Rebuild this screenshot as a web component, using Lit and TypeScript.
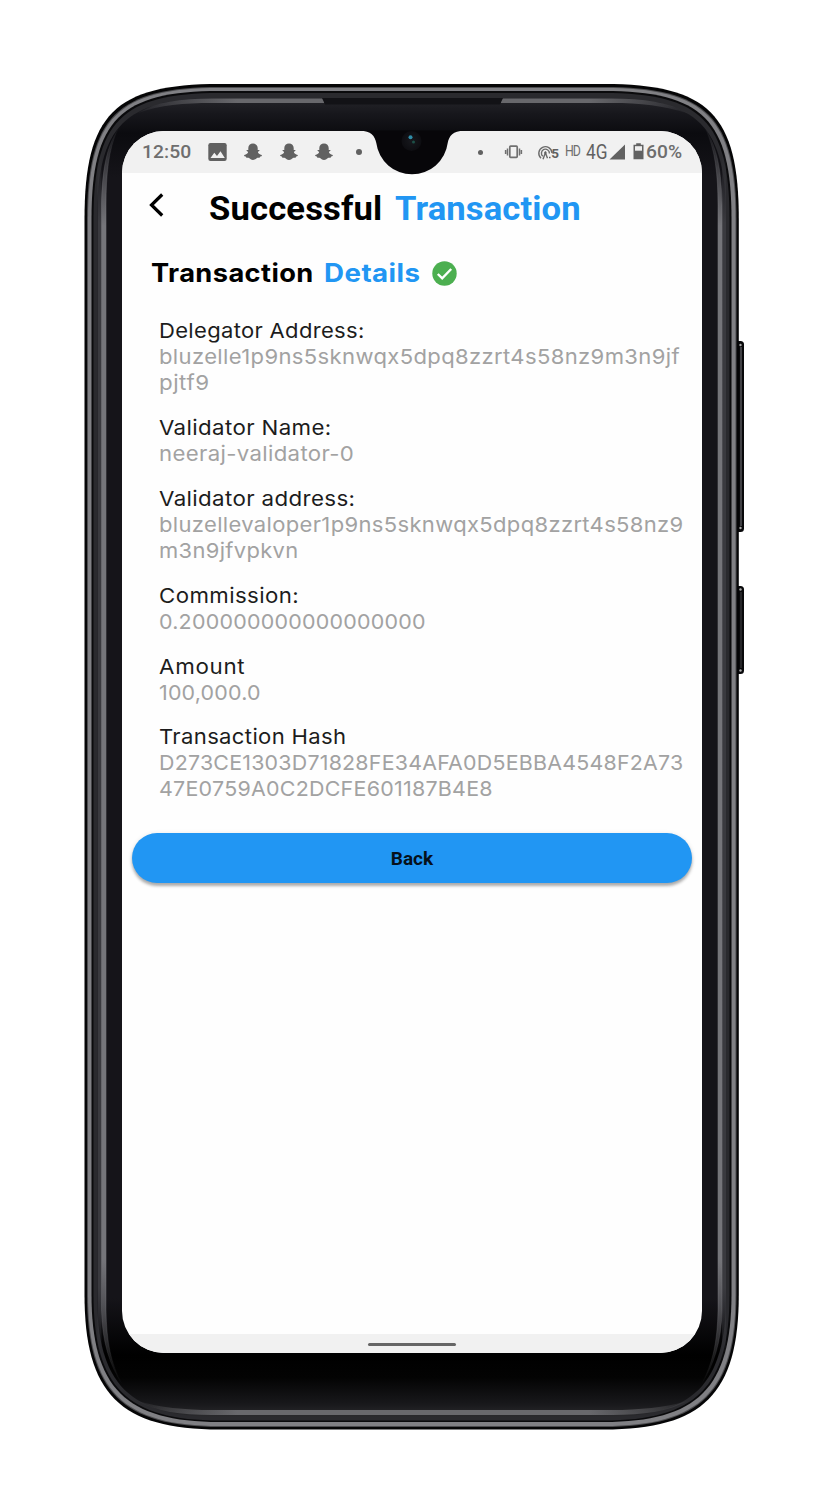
import { LitElement, html, svg, css } from "lit";
import { customElement, property } from "lit/decorators.js";

/** A single line of text fitted to a given width: glyphs widen a little, tracking takes the rest. */
@customElement("fit-line")
class FitLine extends LitElement {
  @property() text = "";
  @property({ type: Number }) w = 100;

  static styles = css`
    :host { display: block; white-space: nowrap; flex: none; }
    .line { display: inline-block; transform-origin: 0 50%; }
  `;

  render() {
    return html`<span class="line">${this.text}</span>`;
  }

  updated() {
    const el = this.renderRoot.querySelector(".line") as HTMLElement;
    const natural = el.offsetWidth;
    const gaps = Math.max(1, this.text.length);
    const scale = Math.min(1.09, Math.max(0.85, 1 + (this.w / natural - 1) * 0.7));
    el.style.letterSpacing = `${(this.w / scale - natural) / gaps}px`;
    el.style.transform = `scaleX(${scale})`;
    this.style.width = `${this.w}px`;
  }
}

type Line = [string, number];
const fields: { label: Line; lines: Line[] }[] = [
  { label: ["Delegator Address:", 205.5], lines: [["bluzelle1p9ns5sknwqx5dpq8zzrt4s58nz9m3n9jf", 520.5], ["pjtf9", 50.5]] },
  { label: ["Validator Name:", 173], lines: [["neeraj-validator-0", 195.5]] },
  { label: ["Validator address:", 196], lines: [["bluzellevaloper1p9ns5sknwqx5dpq8zzrt4s58nz9", 524.5], ["m3n9jfvpkvn", 139.5]] },
  { label: ["Commission:", 140], lines: [["0.200000000000000000", 267]] },
  { label: ["Amount", 86], lines: [["100,000.0", 102]] },
  { label: ["Transaction Hash", 187.5], lines: [["D273CE1303D71828FE34AFA0D5EBBA4548F2A73", 524], ["47E0759A0C2DCFE601187B4E8", 333.5]] },
];

const ghost = html`<svg class="ghost" width="18" height="18" viewBox="0 0 18 18">
  <path fill="#616161" d="M9 .6C6.200.6 4.300 2.600 4.300 5v1.900c-.5.1-1.800-.2-1.800.5 0 .6 1.600.9 1.600 1.600 0 1.200-1.800 2.600-3.800 3.100-.7.300.200 1.300 1.500 1.500.4.100.200 1.100.700 1.200.6.100 1.700-.2 2.500.2.900.5 2.200 1.900 4 1.900s3.100-1.400 4-1.900c.8-.4 1.900-.1 2.500-.2.5-.1.3-1.100.7-1.200 1.300-.2 2.200-1.200 1.500-1.500-2-.5-3.800-1.900-3.800-3.100 0-.7 1.600-1 1.600-1.600 0-.7-1.300-.4-1.800-.5V5C13.700 2.600 11.800.6 9 .6z"/>
</svg>`;

/** Outline of a shell layer with soft, extended corners. */
function shell(x: number, y: number, x2: number, y2: number, inset: number): string {
  const r = 135 - inset;
  const t = r * 0.225;
  const b = r * 0.265;
  return `M${x} ${y + r}C${x} ${y + t} ${x + t} ${y} ${x + r} ${y}H${x2 - r}C${x2 - t} ${y} ${x2} ${y + t} ${x2} ${y + r}` +
    `V${y2 - r}C${x2} ${y2 - b} ${x2 - b} ${y2} ${x2 - r} ${y2}H${x + r}C${x + b} ${y2} ${x} ${y2 - b} ${x} ${y2 - r}Z`;
}

@customElement("app-root")
class AppRoot extends LitElement {
  static styles = css`
    :host { display: block; width: 828px; height: 1512px; background: #fff; overflow: hidden; }
    svg { overflow: visible; flex: none; }
    .phone { position: relative; box-sizing: border-box; width: 828px; height: 1512px; padding: 131px 126px 159px 122px; }
    .frame, .notch { position: absolute; left: 0; top: 0; }
    .screen { position: relative; display: flex; flex-direction: column; width: 580px; height: 1222px; border-radius: 42px; background: #fefefe; overflow: hidden; font-family: Inter, "Noto Sans", sans-serif; }
    .status { display: flex; flex: none; align-items: center; justify-content: space-between; height: 42px; box-sizing: border-box; padding: 0 20px; background: #f1f1f1; color: #6e6e6e; font-family: Roboto, sans-serif; font-size: 19px; line-height: 44px; }
    .side { display: flex; align-items: center; height: 42px; }
    .clock { margin-right: 17px; font-weight: 500; }
    .pic { margin-right: 17px; }
    .ghost { margin-right: 17.5px; }
    .dot { width: 6px; height: 6px; margin-left: 5px; border-radius: 50%; background: #616161; }
    .dot.small { width: 5px; height: 5px; margin: 0 22px 0 0; }
    .vibrate { margin-right: 16px; }
    .hd { margin: 0 6px 0 5px; font-size: 14.5px; line-height: 42px; }
    .net { margin-right: 1px; }
    .signal { margin-right: 8px; }
    .battery { margin: 0 2px 1px 0; }
    .pct { font-weight: 500; }
    .header { display: flex; flex: none; align-items: center; height: 70px; padding: 0 0 1px 27px; box-sizing: border-box; font: 700 34px/70px Roboto, sans-serif; color: #000; }
    .back-arrow { margin: -5px 45px 0 0; }
    .gap12 { margin-left: 12px; }
    .blue { color: #2196f3; }
    .sub { display: flex; flex: none; align-items: center; height: 60px; padding-left: 29px; font-weight: 700; font-size: 25.5px; line-height: 60px; color: #000; }
    .gap11 { margin-left: 10px; }
    .check { margin-left: 12px; }
    .fields { display: flex; flex: none; flex-direction: column; gap: 18.5px; height: 485px; box-sizing: border-box; padding: 15px 0 0 36.5px; font-size: 20.5px; line-height: 26px; color: #1c1c1c; }
    .value { color: #a2a2a2; }
    .value + .value { margin-bottom: .8px; }
    .button { display: flex; flex: none; align-items: center; justify-content: center; width: 560px; height: 50px; margin: 45px 10px 0; padding: 2px 0 0; box-sizing: border-box; border: 0; border-radius: 25px; background: #2196f3; box-shadow: 0 3px 3px rgba(0,0,0,.28), 0 1px 5px rgba(0,0,0,.12); color: #06111b; font: 700 19px/48px Roboto, sans-serif; }
    .spacer { flex: 1; }
    .nav { display: flex; flex: none; align-items: center; justify-content: center; height: 19px; padding-top: 1px; box-sizing: border-box; background: #f1f1f1; }
    .pill { width: 88px; height: 3px; border-radius: 2px; background: #666; }
  `;

  private frame() {
    const layer = (x: number, y: number, x2: number, y2: number, inset: number, fill: string) =>
      svg`<path d=${shell(x, y, x2, y2, inset)} fill=${fill}/>`;
    return html`<svg class="frame" width="828" height="1512" viewBox="0 0 828 1512">
      <defs>
        <linearGradient id="body" x1="0" x2="0" y1="98" y2="1417" gradientUnits="userSpaceOnUse">
          <stop offset="0" stop-color="#25252a"/><stop offset=".012" stop-color="#17171c"/><stop offset=".027" stop-color="#0b0b0f"/>
          <stop offset=".06" stop-color="#151419"/><stop offset=".91" stop-color="#151419"/><stop offset=".953" stop-color="#000"/>
          <stop offset=".97" stop-color="#030303"/><stop offset=".99" stop-color="#18181b"/><stop offset="1" stop-color="#2a2a2d"/>
        </linearGradient>
        <linearGradient id="v" x1="0" x2="0" y1="125" y2="1385" gradientUnits="userSpaceOnUse">
          <stop offset="0" stop-color="#75757a" stop-opacity="0"/><stop offset=".08" stop-color="#75757a"/>
          <stop offset=".9" stop-color="#75757a"/><stop offset="1" stop-color="#75757a" stop-opacity="0"/>
        </linearGradient>
        <linearGradient id="edge" x1="0" x2="0" y1="150" y2="1360" gradientUnits="userSpaceOnUse">
          <stop offset="0" stop-color="#3a3a3f" stop-opacity="0"/><stop offset=".06" stop-color="#3a3a3f"/>
          <stop offset=".94" stop-color="#3a3a3f"/><stop offset="1" stop-color="#3a3a3f" stop-opacity="0"/>
        </linearGradient>
        <linearGradient id="h" x1="138" x2="688" y1="0" y2="0" gradientUnits="userSpaceOnUse">
          <stop offset="0" stop-color="#68686c" stop-opacity=".1"/><stop offset=".18" stop-color="#68686c"/>
          <stop offset=".82" stop-color="#68686c"/><stop offset="1" stop-color="#68686c" stop-opacity=".1"/>
        </linearGradient>
      </defs>
      <rect x="735" y="341" width="9" height="191" rx="3.5" fill="#09090b"/>
      <path d="M741 347V526" stroke="#55555a" stroke-width="1.5"/>
      <circle cx="740.5" cy="345" r="1.2" fill="#aaa"/><circle cx="740.5" cy="528" r="1.2" fill="#aaa"/>
      <rect x="735" y="586" width="9" height="88" rx="3.5" fill="#09090b"/>
      <path d="M741 592V668" stroke="#303034" stroke-width="1.5"/>
      <circle cx="740.5" cy="589.5" r="1.2" fill="#aaa"/><circle cx="740.5" cy="670.5" r="1.2" fill="#aaa"/>
      ${layer(84.5, 84, 738.8, 1429.5, 0, "#050506")}
      ${layer(87, 87, 736.5, 1427, 2, "#4b4b4e")}
      ${layer(88, 88, 735.5, 1426, 3, "#808084")}
      ${layer(91.5, 91, 731.5, 1422, 7, "#0a0a0c")}
      ${layer(93.5, 93, 729.5, 1420.5, 9, "#2a2a2e")}
      ${layer(97, 98, 726, 1417, 13, "url(#body)")}
      <path d="M99.5 1360V150M724 150V1360" stroke="url(#edge)" stroke-width="4" fill="none"/>
      <path d="M117.500 130C106 148 102 172 101.500 205V1310C102 1342 110 1366 122 1384C111 1364 106.500 1342 106 1310V205C106 174 108.500 150 117.500 130ZM706 130C717.500 148 721.500 172 722 205V1310C721.500 1342 713.500 1366 701.500 1384C712.500 1364 717.500 1342 718 1310V205C718 174 715 150 706 130Z" fill="url(#v)" stroke="url(#v)" stroke-width=".6"/>
      <path d="M138 113C156 102 180 98.500 212 98.500H324V103H212C184 103 160 105 138 113ZM501 98.500H612C644 98.500 668 102 688 113.500C664 105.500 640 103 612 103H501Z" fill="url(#h)"/>
      <path d="M138 1401C160 1407.500 184 1410 212 1410H612C640 1410 664 1407.500 688 1401C668 1411.500 644 1415 612 1415H212C180 1415 156 1411.500 138 1401Z" fill="url(#h)"/>
      <path d="M322 98H503L500 104.5H325Z" fill="#121216"/>
    </svg>`;
  }

  render() {
    return html`<div class="phone">
      ${this.frame()}
      <div class="screen">
        <div class="status">
          <div class="side">
            <fit-line class="clock" text="12:50" w="49"></fit-line>
            <svg class="pic" width="19" height="18" viewBox="0 0 19 18"><rect x=".3" width="18.4" height="18" rx="2.2" fill="#616161"/><path d="M2.500 15l3.800-5.200 2.700 3.100 3.500-4.600 4.300 6.700z" fill="#f1f1f1"/></svg>
            ${ghost}${ghost}${ghost}
            <span class="dot"></span>
          </div>
          <div class="side">
            <span class="dot small"></span>
            <svg class="vibrate" width="17" height="14" viewBox="0 0 17 14"><g fill="none" stroke="#707070"><rect x="4.800" y="1.200" width="7.400" height="11.200" rx=".8" stroke-width="1.7"/><path d="M2.500 3.500v7M14.500 3.500v7M.6 5v4M16.400 5v4" stroke-width="1.500"/></g></svg>
            <svg width="22" height="15" viewBox="0 0 22 15"><g fill="none" stroke="#6b6b6b" stroke-width="1.400"><path d="M3 13.200A6.600 6.600 0 1 1 14 8"/><path d="M4.800 11.200A4 4 0 1 1 11.400 8.500"/><path d="M5 14.200l2.400-6.500 2.100 5.500"/></g><circle cx="7.400" cy="7.800" r="1.200" fill="#616161"/><path d="M11 12.500h1.500" stroke="#616161" stroke-width="1.600"/><text x="13.300" y="13.200" font-family="Roboto" font-weight="700" font-size="13.500" fill="#616161">5</text></svg>
            <fit-line class="hd" text="HD" w="15"></fit-line>
            <svg class="net" width="22" height="18" viewBox="0 0 22 18"><text x="0" y="16" font-family="Roboto" font-size="20.500" textLength="21.500" lengthAdjust="spacingAndGlyphs" fill="#616161">4G</text></svg>
            <svg class="signal" width="16" height="16" viewBox="0 0 16 16"><path d="M16 .5V15.500H.5z" fill="#616161"/></svg>
            <svg class="battery" width="11" height="17" viewBox="0 0 11 17"><path d="M3.200.2h4.600v1.500H10.500V16.200H.5V1.700h2.700z" fill="#616161"/><rect x="2" y="3.200" width="7" height="4.500" fill="#eee"/></svg>
            <fit-line class="pct" text="60%" w="36.500"></fit-line>
          </div>
        </div>
        <div class="header">
          <svg class="back-arrow" width="15" height="24" viewBox="0 0 15 24"><path d="M13.200 1.500L2.500 12l10.700 10.500" fill="none" stroke="#000" stroke-width="3.200"/></svg>
          <fit-line text="Successful" w="173.500"></fit-line>
          <fit-line class="blue gap12" text="Transaction" w="185.500"></fit-line>
        </div>
        <div class="sub">
          <fit-line text="Transaction" w="162.500"></fit-line>
          <fit-line class="blue gap11" text="Details" w="96.500"></fit-line>
          <svg class="check" width="25" height="25" viewBox="0 0 25 25"><circle cx="12.5" cy="12.5" r="12.2" fill="#4caf50"/><path d="M5.800 13l4.400 4.400 9-9.400" fill="none" stroke="#fff" stroke-width="2.400"/></svg>
        </div>
        <div class="fields">
          ${fields.map((f) => html`<div>
            <fit-line text=${f.label[0]} w=${f.label[1]}></fit-line>
            ${f.lines.map(([t, w]) => html`<fit-line class="value" text=${t} w=${w}></fit-line>`)}
          </div>`)}
        </div>
        <button class="button">Back</button>
        <div class="spacer"></div>
        <div class="nav"><div class="pill"></div></div>
      </div>
      <svg class="notch" width="828" height="180" viewBox="0 0 828 180">
        <defs><radialGradient id="lens"><stop offset="0" stop-color="#17181d"/><stop offset="1" stop-color="#0d0d11"/></radialGradient></defs>
        <path d="M360 130.500C371 131 375 136 376.300 143A36 36 0 0 0 447.700 143C449 136 453 131 464 130.500Z" fill="#070609"/>
        <circle cx="411.500" cy="141" r="10" fill="url(#lens)"/>
        <circle cx="410.500" cy="137.300" r="2" fill="#2f8da8"/><circle cx="413.500" cy="142" r="1.500" fill="#1d5148"/>
      </svg>
    </div>`;
  }
}
